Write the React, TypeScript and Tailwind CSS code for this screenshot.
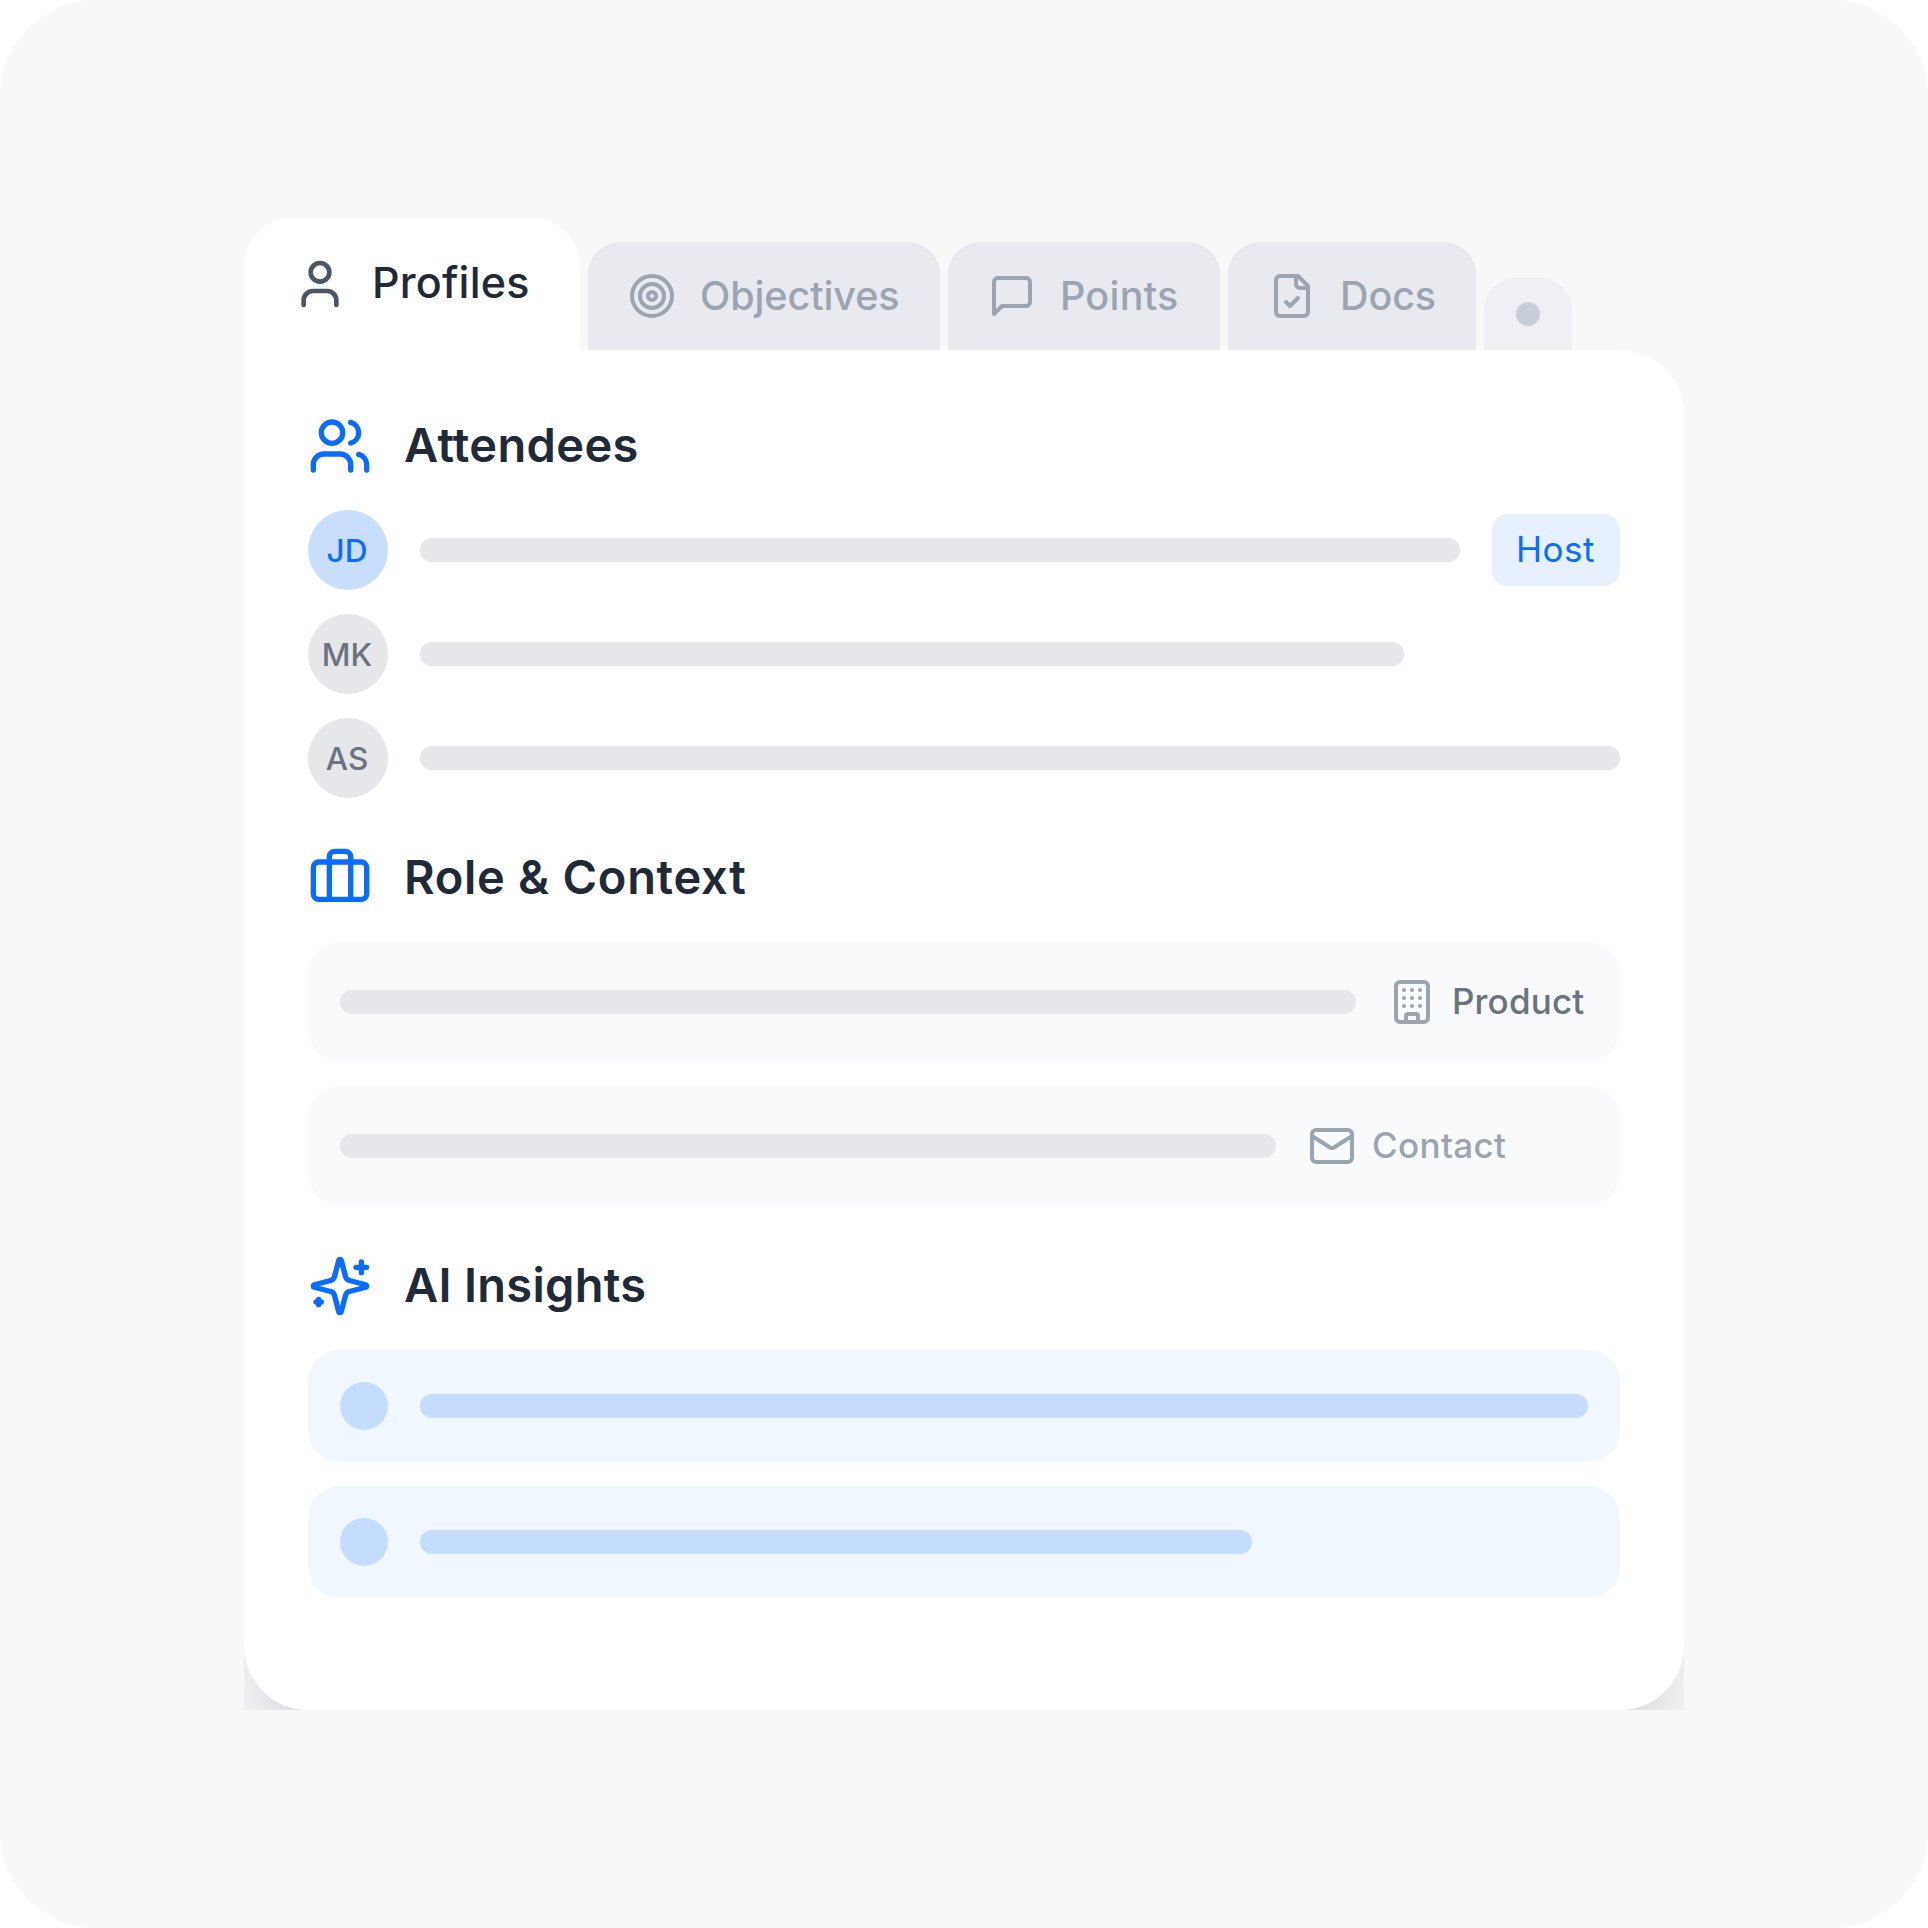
import type { ReactNode } from "react";
import { Briefcase, Building, Mail, Target, User, Users } from "lucide-react";

interface IconProps {
  className?: string;
}

function Svg({ className, children }: IconProps & { children: ReactNode }) {
  return (
    <svg
      viewBox="0 0 24 24"
      fill="none"
      stroke="currentColor"
      strokeWidth={2}
      strokeLinecap="round"
      strokeLinejoin="round"
      className={className}
    >
      {children}
    </svg>
  );
}

function MessageIcon({ className }: IconProps) {
  return (
    <Svg className={className}>
      <path d="M21 15a2 2 0 0 1-2 2H7l-4 4V5a2 2 0 0 1 2-2h14a2 2 0 0 1 2 2z" />
    </Svg>
  );
}

function FileCheckIcon({ className }: IconProps) {
  return (
    <Svg className={className}>
      <path d="M15 2H6a2 2 0 0 0-2 2v16a2 2 0 0 0 2 2h12a2 2 0 0 0 2-2V7Z" />
      <path d="M14 2v4a2 2 0 0 0 2 2h4" />
      <path d="m9 15 2 2 4-4" />
    </Svg>
  );
}

function SparklesIcon({ className }: IconProps) {
  return (
    <Svg className={className}>
      <path d="M9.937 15.5A2 2 0 0 0 8.5 14.063l-6.135-1.582a.5.5 0 0 1 0-.962L8.5 9.936A2 2 0 0 0 9.937 8.5l1.582-6.135a.5.5 0 0 1 .963 0L14.063 8.5A2 2 0 0 0 15.5 9.937l6.135 1.581a.5.5 0 0 1 0 .964L15.5 14.063a2 2 0 0 0-1.437 1.437l-1.582 6.135a.5.5 0 0 1-.963 0z" />
      <path d="M20 3v4" />
      <path d="M22 5h-4" />
      <path d="M4 17v2" />
      <path d="M5 18H3" />
    </Svg>
  );
}

// inactive tabs, each one has its own width
const tabs = [
  { label: "Objectives", icon: Target, width: "w-[352px]", text: "tracking-[-0.1px]" },
  { label: "Points", icon: MessageIcon, width: "w-[272px]", text: "tracking-[0.25px]" },
  { label: "Docs", icon: FileCheckIcon, width: "w-[248px]", text: "tracking-[-0.1px]" },
];

const attendees = [
  { initials: "JD", avatar: "bg-[#c9defc] text-[#0a6cff]", bar: "flex-1", host: true },
  { initials: "MK", avatar: "bg-[#e5e7eb] text-[#6b7280]", bar: "w-[984px]", host: false },
  { initials: "AS", avatar: "bg-[#e5e7eb] text-[#6b7280]", bar: "flex-1", host: false },
];

const context = [
  { label: "Product", icon: Building, bar: "w-[1016px]", text: "tracking-[0.15px] text-[#6b7280]" },
  { label: "Contact", icon: Mail, bar: "w-[936px]", text: "tracking-[0.35px] text-[#9ba4b1]" },
];

const insights = ["w-[1168px]", "w-[832px]"];

interface SectionTitleProps {
  icon: ReactNode;
  title: string;
  tracking: string;
}

function SectionTitle({ icon, title, tracking }: SectionTitleProps) {
  return (
    <div className="flex h-16 items-center gap-8 text-[#0a6cff]">
      {icon}
      <h2
        className={`pb-[3px] text-[47px] leading-none font-semibold whitespace-nowrap text-[#1f2937] ${tracking}`}
      >
        {title}
      </h2>
    </div>
  );
}

export default function App() {
  return (
    <div className="h-[1928px] w-[1928px] overflow-hidden bg-white font-['Inter',sans-serif]">
      <div className="h-full w-full rounded-[96px] bg-[#f8f8f8] px-[244px] pt-[218px]">
        <div className="overflow-hidden">
          {/* Tabs */}
          <div className="flex h-[132px] items-end gap-2">
            <div className="flex h-full w-[336px] items-center gap-6 rounded-t-[48px] bg-white pl-12">
              <User className="size-14 shrink-0 text-[#4b5563]" />
              <span className="pb-[3px] text-[43px] leading-none font-medium tracking-[0.2px] text-[#1f2937]">
                Profiles
              </span>
            </div>
            {tabs.map(({ label, icon: Icon, width, text }) => (
              <div
                key={label}
                className={`flex h-[108px] items-center gap-6 rounded-t-[32px] bg-[#e8eaef] pl-10 text-[#9ba4b1] ${width}`}
              >
                <Icon className="size-12 shrink-0" />
                <span className={`pt-0.5 text-[39.5px] leading-none font-medium ${text}`}>{label}</span>
              </div>
            ))}
            <div className="flex h-[72px] w-[88px] items-center justify-center rounded-t-[32px] bg-[#eff0f4]">
              <div className="size-6 rounded-full bg-[#c8ced9]" />
            </div>
          </div>

          {/* Card */}
          <div className="flex h-[1360px] flex-col gap-12 rounded-[64px] rounded-tl-none bg-white p-16 shadow-[0_80px_100px_-20px_rgba(31,41,75,0.1),0_32px_40px_-24px_rgba(31,41,75,0.1)]">
            <section className="flex flex-col gap-8">
              <SectionTitle
                icon={<Users className="size-16" />}
                title="Attendees"
                tracking="tracking-[0.35px]"
              />
              <div className="flex flex-col gap-6">
                {attendees.map(({ initials, avatar, bar, host }) => (
                  <div key={initials} className="flex h-20 items-center gap-8">
                    <div
                      className={`flex size-20 shrink-0 items-center justify-center rounded-full pt-0.5 pr-0.5 text-[31.5px] leading-none font-medium ${avatar}`}
                    >
                      {initials}
                    </div>
                    <div className={`h-6 rounded-full bg-[#e5e7eb] ${bar}`} />
                    {host && (
                      <div className="flex h-[72px] w-32 items-center rounded-2xl bg-[#e6f0fe] pb-0.5 pl-6 text-[35px] leading-none font-normal tracking-[0.5px] text-[#0a6cff]">
                        Host
                      </div>
                    )}
                  </div>
                ))}
              </div>
            </section>

            <section className="flex flex-col gap-8">
              <SectionTitle
                icon={<Briefcase className="size-16" />}
                title="Role & Context"
                tracking="tracking-[0.7px]"
              />
              <div className="flex flex-col gap-6">
                {context.map(({ label, icon: Icon, bar, text }) => (
                  <div key={label} className="flex h-[120px] items-center rounded-[32px] bg-[#f9fafc] px-8">
                    <div className={`h-6 rounded-full bg-[#e5e7eb] ${bar}`} />
                    <Icon className="ml-8 size-12 shrink-0 text-[#9ba4b1]" />
                    <span className={`ml-4 pb-0.5 text-[35px] leading-none font-medium ${text}`}>{label}</span>
                  </div>
                ))}
              </div>
            </section>

            <section className="flex flex-col gap-8">
              <SectionTitle
                icon={<SparklesIcon className="size-16" />}
                title="AI Insights"
                tracking="tracking-[0.3px]"
              />
              <div className="flex flex-col gap-6">
                {insights.map((bar) => (
                  <div key={bar} className="flex h-28 items-center gap-8 rounded-[32px] bg-[#f0f7ff] px-8">
                    <div className="size-12 shrink-0 rounded-full bg-[#c4dcff]" />
                    <div className={`h-6 rounded-full bg-[#c4dcff] ${bar}`} />
                  </div>
                ))}
              </div>
            </section>
          </div>
        </div>
      </div>
    </div>
  );
}
